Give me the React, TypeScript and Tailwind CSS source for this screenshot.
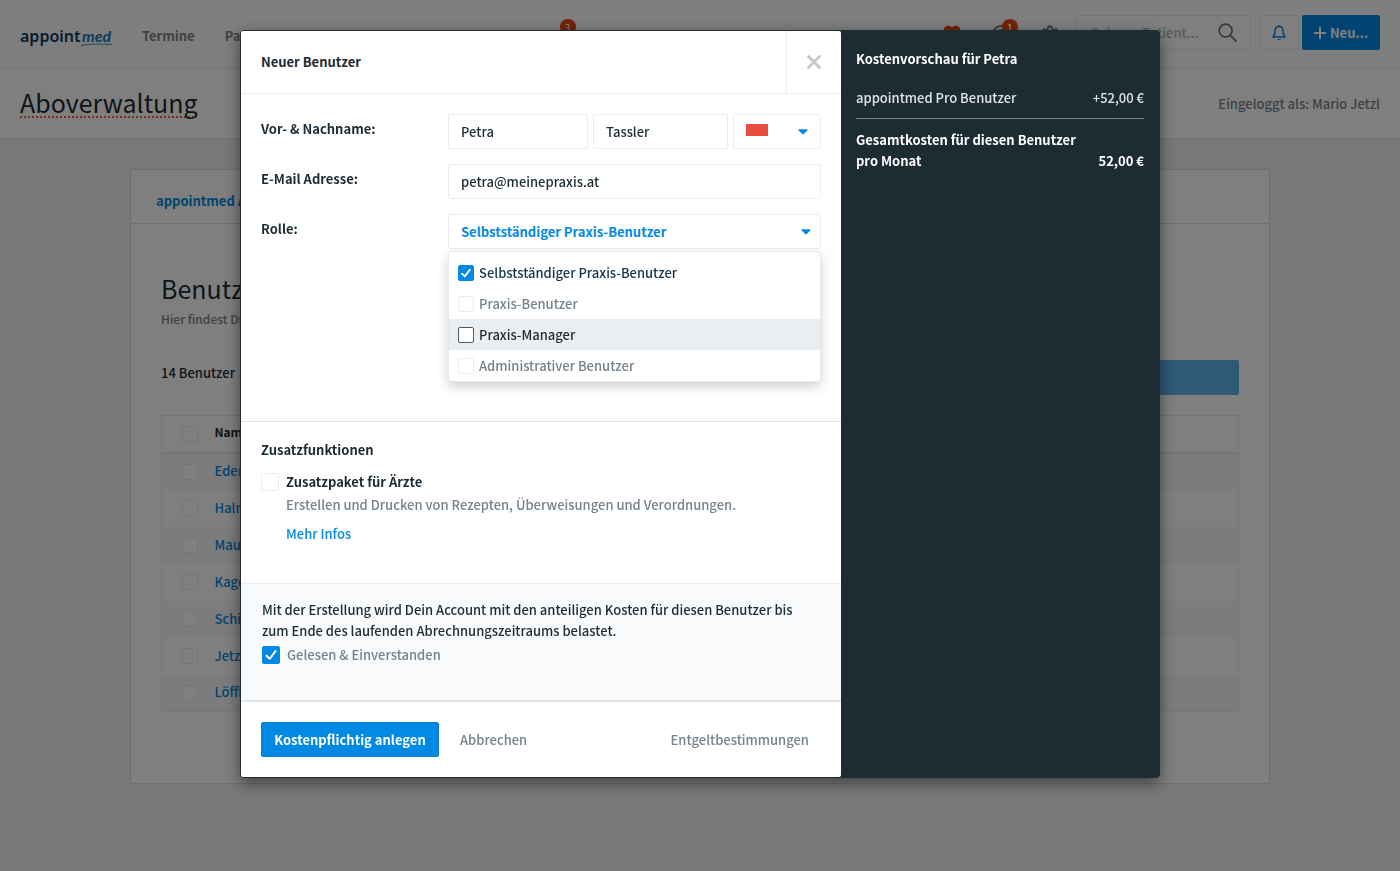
import { useState } from "react";
import type { ReactNode } from "react";

const people = ["Eder", "Halm", "Maurer", "Kager", "Schiller", "Jetzl", "Löffler"];
const roles = [
  { name: "Selbstständiger Praxis-Benutzer", tone: "text-[#12344d]" },
  { name: "Praxis-Benutzer", tone: "text-[#76828c]" },
  { name: "Praxis-Manager", tone: "text-[#1d2b33]" },
  { name: "Administrativer Benutzer", tone: "text-[#76828c]" },
];

function Tick({ size }: { size: string }) {
  return (
    <svg viewBox="0 0 16 16" className={`pointer-events-none absolute inset-0 ${size}`} fill="none" stroke="#fff" strokeWidth="1.800" strokeLinecap="round" strokeLinejoin="round">
      <path d="M4 8.6 6.8 11.4 12 4.6" />
    </svg>
  );
}

function Check({ id, large, outlined, start = false, label }: { id: string; large?: boolean; outlined?: boolean; start?: boolean; label?: string }) {
  const [on, setOn] = useState(start);
  const size = large ? "size-[18px]" : "size-4";
  const look = on ? "border-[#0289e3] bg-[#0289e3]" : outlined ? "border-[#4a5a66]" : "border-[#ececec]";
  return (
    <span className={`relative inline-block shrink-0 ${size}`}>
      <input id={id} type="checkbox" aria-label={label} checked={on} onChange={() => setOn(!on)} className={`block appearance-none rounded-[2px] border ${look} ${on ? "" : "bg-white"} ${size}`} />
      {on && <Tick size={size} />}
    </span>
  );
}

function Caret() {
  return (
    <svg viewBox="0 0 10 6" className="pointer-events-none h-[6px] w-[10px]" fill="#0289e3">
      <path d="M1.200.3h7.600c.7 0 1 .7.5 1.200L5.700 5.100a1 1 0 0 1-1.400 0L.7 1.500C.2 1 .5.3 1.200.3Z" />
    </svg>
  );
}

function Row({ label, htmlFor, children }: { label: string; htmlFor: string; children: ReactNode }) {
  return (
    <div className="flex items-start">
      <label htmlFor={htmlFor} className="w-[187px] shrink-0 pt-1 font-bold">{label}</label>
      <div className="relative flex min-w-0 flex-1 gap-[5px]">{children}</div>
    </div>
  );
}

const field = "h-[35px] min-w-0 rounded-[2px] border border-[#ececec] bg-white px-[12px]";

function Page() {
  return (
    <div className="min-h-screen bg-[#eef1f4]">
      <header className="flex h-[69px] items-start border-b-2 border-[#f2f2f2] bg-[#fdfdfd] px-5 pt-[15px] text-[#7d8388]">
        <a href="#" aria-label="appointmed" className="mt-[7px] block">
          <svg viewBox="0 0 94 28" className="h-7 w-[94px]">
            <text x="0" y="20" fontFamily="Noto Sans" fontWeight="600" fontSize="16" fill="#0b3b5e">appoint</text>
            <text x="62" y="20" fontFamily="Lato" fontStyle="italic" fontWeight="700" fontSize="16" fill="#1478ba">med</text>
            <path d="M61 23.500C70 21.500 82 22 92 22.500" stroke="#1478ba" strokeWidth=".8" fill="none" />
          </svg>
        </a>
        <nav className="ml-7 flex flex-1 gap-[30px] pt-[10px] font-bold">
          <a href="#">Termine</a>
          <a href="#">Patienten</a>
          <span className="-mt-[6px] ml-[243px] flex size-4 items-center justify-center rounded-full bg-[#e8440f] text-[11px] font-normal text-white">3</span>
        </nav>
        <div className="mr-[17px] flex gap-[31px] pt-[10px]">
          <svg viewBox="0 0 18 16" className="h-4 w-[18px]" fill="#e8440f"><path d="M9 15 2 8C-2 3 5-2 9 2.500 13-2 20 3 16 8Z" /></svg>
          <span className="relative block">
            <svg viewBox="0 0 18 18" className="size-[18px]" fill="none" stroke="#6d7780" strokeWidth="2"><circle cx="9" cy="9" r="8" /><circle cx="9" cy="9" r="4" /></svg>
            <span className="absolute -top-[6px] left-[10px] flex size-4 items-center justify-center rounded-full bg-[#e8440f] text-[11px] text-white">1</span>
          </span>
          <svg viewBox="0 0 24 24" className="size-[18px]" fill="none" stroke="#6d7780" strokeWidth="2.500"><path d="M10 2h4l.7 3 2.500 1.400 3-.9 2 3.500-2.300 2v2.500l2.300 2-2 3.500-3-.9-2.500 1.400-.7 3h-4l-.7-3-2.500-1.400-3 .9-2-3.500 2.300-2V11L1.800 9l2-3.500 3 .9L9.300 5Z" /><circle cx="12" cy="12.300" r="3" /></svg>
        </div>
        <div className="flex h-[35px] w-[175px] items-center rounded-[2px] border border-[#ececec] bg-white pr-[13px] pl-[13px]">
          <input aria-label="Patientensuche" placeholder="Gehe zu Patient..." className="min-w-0 flex-1 placeholder:text-[#b0b4b8]" />
          <svg viewBox="0 0 20 20" className="size-[19px]" fill="none" stroke="#6d7377" strokeWidth="1.800" strokeLinecap="round"><circle cx="8" cy="8" r="6.800" /><path d="m13 13 6 6" /></svg>
        </div>
        <button aria-label="Benachrichtigungen" className="ml-2 flex h-[35px] w-10 items-center justify-center rounded-[2px] border border-[#ececec] bg-white">
          <svg viewBox="0 0 14 16" className="h-4 w-[14px]" fill="none" stroke="#0289e3" strokeWidth="1.500" strokeLinejoin="round"><path d="M7 1.500c-2.500 0-3.900 1.800-3.900 4.200C3.100 9 2.300 10.500 1 12h12c-1.300-1.500-2.100-3-2.100-6.300 0-2.400-1.400-4.200-3.900-4.200ZM7 1.500V0" /><path d="M5.200 14a1.900 1.500 0 0 0 3.600 0Z" fill="#0289e3" stroke="none" /></svg>
        </button>
        <button className="ml-[3px] flex h-[35px] w-[78px] items-center justify-center gap-1 rounded-[2px] bg-[#0289e3] font-bold text-white">
          <svg viewBox="0 0 12 12" className="size-3" stroke="#fff" strokeWidth="2"><path d="M6 0v12M0 6h12" /></svg>
          Neu...
        </button>
      </header>
      <div className="flex h-[70px] items-center justify-between border-b border-[#dcdfe1] bg-white px-5">
        <h1 className="pb-1 text-[25px] leading-[36px] font-normal underline decoration-[#e8604f] decoration-dotted decoration-2 underline-offset-4 [text-decoration-skip-ink:none]">Aboverwaltung</h1>
        <p className="text-[#7d8388]">Eingeloggt als: Mario Jetzl</p>
      </div>
      <main className="mx-auto mt-[30px] max-w-[1140px] border border-[#dcdfe1] bg-white pb-[71px]">
        <div className="flex h-[54px] items-center border-b border-[#dcdfe1] px-[25px] pt-2 font-bold text-[#0289e3]">
          <a href="#">appointmed Abo</a>
        </div>
        <div className="px-[30px] pt-[46px]">
          <h2 className="text-[25px] leading-[36px] font-normal">Benutzer</h2>
          <p className="mt-[2px] text-[12px] text-[#7d8388]">Hier findest Du</p>
          <div className="mt-[31px] flex h-[35px] items-start justify-between">
            <p className="pt-[2px]">14 Benutzer</p>
            <button aria-label="Benutzer anlegen" className="h-[35px] w-[200px] rounded-[2px] bg-[#5cb4ef]" />
          </div>
          <table className="mt-5 w-full border-collapse border border-[#ececec] text-left">
            <thead>
              <tr className="h-[37px] border-b-2 border-[#ececec]">
                <th className="w-[53px] pl-5"><div className="flex"><Check id="all" label="Alle auswählen" /></div></th>
                <th className="pb-1 text-[12px] leading-4 font-bold">Name</th>
              </tr>
            </thead>
            <tbody>
              {people.map((p) => (
                <tr key={p} className="h-[37px] odd:bg-[#f8f8f8]">
                  <td className="pl-5"><div className="flex"><Check id={p} label={p} /></div></td>
                  <td className="pb-[2px]"><a href="#" className="text-[#0289e3]">{p}</a></td>
                </tr>
              ))}
            </tbody>
          </table>
        </div>
      </main>
    </div>
  );
}

export default function App() {
  return (
    <div className="min-h-screen font-['Noto_Sans_CJK_SC','Noto_Sans',sans-serif] text-[13px] leading-[21px] font-medium text-[#1d2b33]">
      <Page />
      <div className="fixed inset-0 flex items-start justify-center overflow-auto bg-black/50 pt-[30px]">
        <div role="dialog" aria-modal="true" aria-labelledby="title" className="flex w-full max-w-[920px] rounded-[4px] border border-[#1d2b33] bg-[#1d2b33] shadow-[0_5px_15px_rgba(0,0,0,0.5)]">
          <form className="w-[600px] shrink-0 rounded-[2px] bg-white" onSubmit={(e) => e.preventDefault()}>
            <div className="flex h-[63px] items-stretch justify-between border-b border-[#ececec] pl-5">
              <h2 id="title" className="self-center pb-[2px] font-bold">Neuer Benutzer</h2>
              <button type="button" aria-label="Schließen" className="flex w-[55px] items-center justify-center border-l border-[#ececec]">
                <svg viewBox="0 0 14 14" className="size-[14px]" stroke="#c9c9c9" strokeWidth="3" strokeLinecap="round"><path d="m1.500 1.500 11 11M12.500 1.500l-11 11" /></svg>
              </button>
            </div>
            <div className="flex flex-col gap-[15px] border-b border-[#e4e4e4] px-5 pt-5 pb-[172px]">
              <Row label="Vor- & Nachname:" htmlFor="first">
                <input id="first" defaultValue="Petra" className={`${field} w-[140px]`} />
                <input aria-label="Nachname" defaultValue="Tassler" className={`${field} w-[135px]`} />
                <button type="button" aria-label="Farbe" className={`${field} flex flex-1 items-center justify-between`}>
                  <span className="mb-1 block h-3 w-[22px] bg-[#e74c3c]" />
                  <Caret />
                </button>
              </Row>
              <Row label="E-Mail Adresse:" htmlFor="mail">
                <input id="mail" type="email" defaultValue="petra@meinepraxis.at" className={`${field} flex-1`} />
              </Row>
              <Row label="Rolle:" htmlFor="role">
                <button id="role" type="button" className={`${field} flex flex-1 items-center justify-between pr-[9px] font-bold text-[#0289e3]`}>
                  Selbstständiger Praxis-Benutzer
                  <Caret />
                </button>
                <div className="absolute inset-x-0 top-[37px] rounded-[4px] border border-[#e8e8e8] bg-white pt-[5px] shadow-[0_5px_12px_rgba(0,0,0,0.18)]">
                  {roles.map((r, i) => (
                    <div key={r.name} className={`flex h-[31px] items-center gap-[5px] pl-[9px] ${i === 2 ? "bg-[#ebeef1]" : ""}`}>
                      <Check id={`role-${i}`} start={i === 0} outlined={i === 2} />
                      <label htmlFor={`role-${i}`} className={r.tone}>{r.name}</label>
                    </div>
                  ))}
                </div>
              </Row>
            </div>
            <div className="border-b border-[#ececec] px-5 pt-[17px] pb-[39px]">
              <h3 className="font-bold">Zusatzfunktionen</h3>
              <div className="mt-[11px] flex items-start gap-[7px]">
                <div className="flex h-[22px] items-center">
                  <Check id="extra" large />
                </div>
                <div>
                  <label htmlFor="extra" className="block font-bold">Zusatzpaket für Ärzte</label>
                  <p className="mt-[2px] text-[#76828c]">Erstellen und Drucken von Rezepten, Überweisungen und Verordnungen.</p>
                  <a href="#" className="mt-2 block text-[#0289e3]">Mehr Infos</a>
                </div>
              </div>
            </div>
            <div className="border-b-2 border-[#e4e7ea] bg-[#f8fafc] px-[21px] pt-[15px] pb-[35px]">
              <p className="pr-3">Mit der Erstellung wird Dein Account mit den anteiligen Kosten für diesen Benutzer bis zum Ende des laufenden Abrechnungszeitraums belastet.</p>
              <div className="mt-[3px] flex items-center gap-[7px]">
                <Check id="agree" large start />
                <label htmlFor="agree" className="text-[#76828c]">Gelesen &amp; Einverstanden</label>
              </div>
            </div>
            <div className="flex items-center px-5 py-5 text-[#76828c]">
              <button type="submit" className="h-[35px] w-[178px] rounded-[2px] border border-[#0a7ccb] bg-[#0289e3] font-bold text-white">Kostenpflichtig anlegen</button>
              <button type="button" className="ml-[21px]">Abbrechen</button>
              <a href="#" className="mr-3 ml-auto">Entgeltbestimmungen</a>
            </div>
          </form>
          <aside className="flex-1 px-[15px] pt-[17px] text-white">
            <h3 className="font-bold">Kostenvorschau für Petra</h3>
            <div className="mt-[18px] flex justify-between border-b border-[#76828c] pb-[10px] text-[#dfe5ea]">
              <span>appointmed Pro Benutzer</span>
              <span>+52,00 €</span>
            </div>
            <div className="mt-[10px] flex items-end justify-between font-bold">
              <span className="max-w-[230px]">Gesamtkosten für diesen Benutzer pro Monat</span>
              <span>52,00 €</span>
            </div>
          </aside>
        </div>
      </div>
    </div>
  );
}
